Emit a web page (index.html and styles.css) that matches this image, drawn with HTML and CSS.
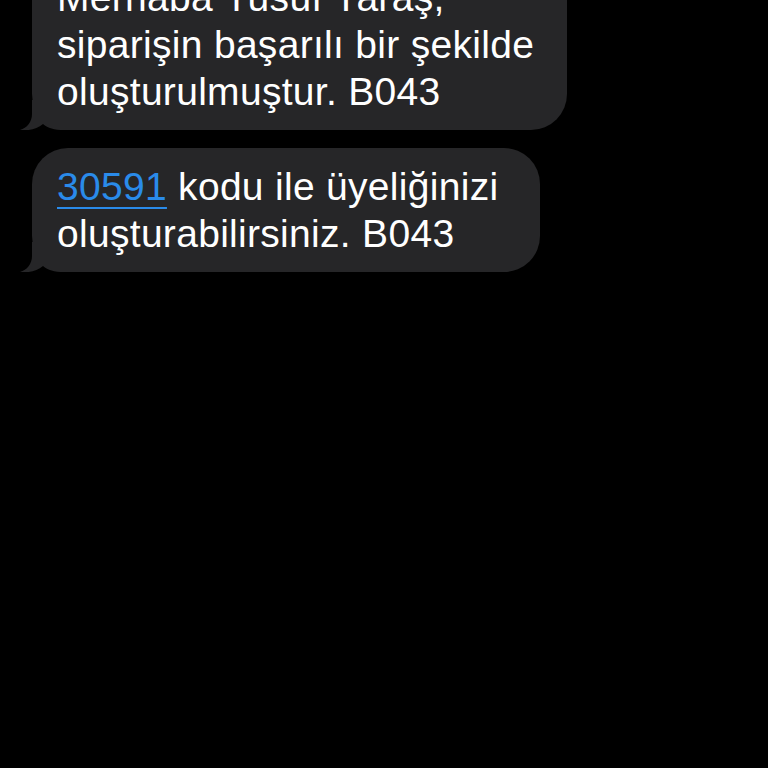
FILE: index.html
```html
<!DOCTYPE html>
<html lang="tr">
<head>
  <meta charset="UTF-8">
  <title>Mesajlar</title>
  <link rel="stylesheet" href="styles.css">
</head>
<body>

  <div class="sohbet">
    <div class="balon balon-ilk">
      Merhaba Yusuf Yaraş,<br>
      siparişin başarılı bir şekilde<br>
      oluşturulmuştur. B043
      <svg class="kuyruk" width="52" height="30" viewBox="0 0 52 30">
        <path d="M12,0 L12,14 C12,22 7,28 0,30 C9,31 17,29 23,24 C28,28 34,30 44,30 L52,30 L52,0 Z"/>
      </svg>
    </div>

    <div class="balon balon-kod">
      <a href="#" class="kod">30591</a> kodu ile üyeliğinizi<br>
      oluşturabilirsiniz. B043
      <svg class="kuyruk" width="52" height="30" viewBox="0 0 52 30">
        <path d="M12,0 L12,14 C12,22 7,28 0,30 C9,31 17,29 23,24 C28,28 34,30 44,30 L52,30 L52,0 Z"/>
      </svg>
    </div>
  </div>

</body>
</html>
```

FILE: styles.css
```css
body {
  margin: 0;
  background-color: #000;
  font-family: 'Liberation Sans', Arial, sans-serif;
  overflow: hidden;
}

.sohbet {
  display: flex;
  flex-direction: column;
  align-items: flex-start;
  gap: 18px;
  padding-left: 32px;
}

.balon {
  position: relative;
  isolation: isolate;
  background-color: #262628;
  color: #fff;
  font-size: 39px;
  line-height: 47px;
  letter-spacing: 0.3px;
  white-space: nowrap;
  padding: 15px 33px 15px 25px;
  border-radius: 36px;
}

.balon-ilk {
  margin-top: -41px;
}

.balon-kod {
  padding-right: 42px;
}

.kod {
  color: #2a8bea;
  text-decoration: underline;
  text-decoration-thickness: 2px;
  text-underline-offset: 7px;
}

.kuyruk {
  position: absolute;
  z-index: -1;
  left: -12px;
  bottom: 0;
  fill: #262628;
}
```
